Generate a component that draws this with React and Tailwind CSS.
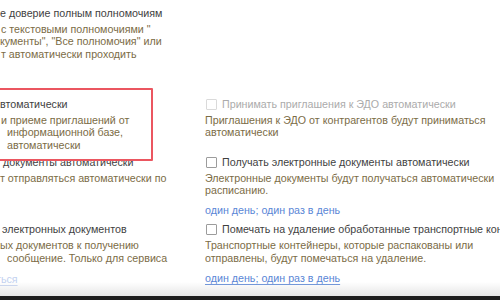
import React from "react";

const Box = ({ disabled }) => (
  <span
    className={`inline-block w-[11px] h-[11px] shrink-0 rounded-[1px] border bg-white ${
      disabled ? "border-[#dadada]" : "border-[#9c9c9c]"
    }`}
  />
);

const Title = ({ children, disabled, check, pl = "pl-0" }) => (
  <div
    className={`flex items-center gap-[5px] h-[13px] leading-[13px] text-[10.7px] whitespace-nowrap ${pl} ${
      disabled ? "text-[#ababab]" : "text-[#3f3f3f]"
    }`}
  >
    {check && <Box disabled={disabled} />}
    <span>{children}</span>
  </div>
);

// lines: [text, left padding class]
const Desc = ({ lines }) => (
  <div className="mt-[3px] text-[10.7px] leading-[12.5px] text-[#7b6c46] whitespace-nowrap">
    {lines.map(([text, pl], i) => (
      <div key={i} className={pl}>
        {text}
      </div>
    ))}
  </div>
);

const Link = ({ children, className = "" }) => (
  <div
    className={`mt-[7px] text-[10.7px] leading-[12.5px] text-[#5a86d6] underline underline-offset-2 whitespace-nowrap ${className}`}
  >
    {children}
  </div>
);

export default function App() {
  return (
    <div
      className="relative w-[500px] h-[300px] overflow-hidden bg-white"
      style={{ fontFamily: '"Liberation Sans", Arial, sans-serif' }}
    >
      <div className="flex flex-col pt-[6.5px]">
        {/* Row 1 */}
        <div className="grid grid-cols-[205px_1fr]">
          <div className="overflow-hidden">
            <Title>е доверие полным полномочиям</Title>
            <Desc
              lines={[
                ["с текстовыми полномочиями \"", "pl-[1px]"],
                ["кументы\", \"Все полномочия\" или", "pl-0"],
                ["т автоматически проходить", "pl-[1px]"],
              ]}
            />
          </div>
          <div />
        </div>

        {/* Row 2 */}
        <div className="grid grid-cols-[205px_1fr] mt-[37.5px]">
          <div className="overflow-hidden">
            <Title>втоматически</Title>
            <Desc
              lines={[
                ["и приеме приглашений от", "pl-[1px]"],
                ["информационной базе,", "pl-[7px]"],
                ["автоматически", "pl-[7px]"],
              ]}
            />
          </div>
          <div className="overflow-hidden">
            <Title check disabled pl="pl-[1px]">
              Принимать приглашения к ЭДО автоматически
            </Title>
            <Desc
              lines={[
                ["Приглашения к ЭДО от контрагентов будут приниматься", "pl-0"],
                ["автоматически", "pl-0"],
              ]}
            />
          </div>
        </div>

        {/* Row 3 */}
        <div className="grid grid-cols-[205px_1fr] mt-[4.5px]">
          <div className="overflow-hidden">
            <Title pl="pl-[3px]">документы автоматически</Title>
            <Desc lines={[["т отправляться автоматически по", "pl-0"]]} />
          </div>
          <div className="overflow-hidden">
            <Title check pl="pl-[1px]">
              Получать электронные документы автоматически
            </Title>
            <Desc
              lines={[
                ["Электронные документы будут получаться автоматически", "pl-0"],
                ["расписанию.", "pl-0"],
              ]}
            />
            <Link>один день; один раз в день</Link>
          </div>
        </div>

        {/* Row 4 */}
        <div className="grid grid-cols-[205px_1fr] mt-[7.25px]">
          <div className="overflow-hidden">
            <Title pl="pl-[2px]">электронных документов</Title>
            <Desc
              lines={[
                ["ых документов к получению", "pl-0"],
                ["сообщение. Только для сервиса", "pl-[7px]"],
              ]}
            />
            <Link className="text-[#c2d1f0] mt-[9px] -ml-[4px]">ться</Link>
          </div>
          <div className="overflow-hidden">
            <Title check pl="pl-[1px]">
              Помечать на удаление обработанные транспортные контейнеры
            </Title>
            <Desc
              lines={[
                ["Транспортные контейнеры, которые распакованы или", "pl-0"],
                ["отправлены, будут помечаться на удаление.", "pl-0"],
              ]}
            />
            <Link className="mt-[8px]">один день; один раз в день</Link>
          </div>
        </div>
      </div>

      {/* red annotation frame */}
      <div className="absolute left-[-10px] top-[88px] w-[163px] h-[73px] border-2 border-[#eb5660] rounded-[1px]" />

      {/* bottom shade and window edge */}
      <div className="absolute left-0 right-0 bottom-[4px] h-[14px] bg-gradient-to-b from-white/0 to-[#e6e6e6]" />
      <div className="absolute left-0 right-0 bottom-0 h-[4px] bg-[#1e1e1e]" />
    </div>
  );
}
